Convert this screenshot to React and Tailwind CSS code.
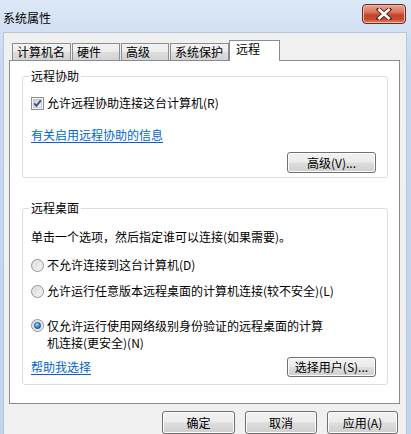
import React from 'react';

const btn =
    'flex items-center justify-center border border-[#707070] rounded-[3px] bg-[linear-gradient(#f2f2f2_0%,#ebebeb_48%,#dddddd_52%,#cfcfcf_100%)] shadow-[inset_0_0_0_1px_#fcfcfc] text-[12px] leading-[14px] text-black';

const tabs = [
    { label: '计算机名', w: 'w-[59px]' },
    { label: '硬件', w: 'w-[48px]' },
    { label: '高级', w: 'w-[48px]' },
    { label: '系统保护', w: 'w-[59px]' },
];

function CheckBox() {
    return (
        <svg width="13" height="13" viewBox="0 0 13 13">
            <defs>
                <linearGradient id="cbg" x1="0" y1="0" x2="1" y2="1">
                    <stop offset="0" stopColor="#cbcfd5" />
                    <stop offset="1" stopColor="#f6f6f6" />
                </linearGradient>
            </defs>
            <rect x="0.5" y="0.5" width="12" height="12" fill="#f4f4f4" stroke="#8e8f8f" />
            <rect x="2.5" y="2.5" width="8" height="8" fill="url(#cbg)" stroke="#c8cbd0" />
            <path d="M3.2 6.4 L5.4 8.8 L9.8 3.4" fill="none" stroke="#3a4f86" strokeWidth="1.9" />
        </svg>
    );
}

function Radio({ checked }) {
    return (
        <svg width="13" height="13" viewBox="0 0 13 13">
            <defs>
                <linearGradient id="rbg" x1="0" y1="0" x2="1" y2="1">
                    <stop offset="0" stopColor="#d4d4d4" />
                    <stop offset="1" stopColor="#fbfbfb" />
                </linearGradient>
                <radialGradient id="rdot" cx="0.4" cy="0.35" r="0.7">
                    <stop offset="0" stopColor="#9fe0fb" />
                    <stop offset="0.5" stopColor="#3b9ae0" />
                    <stop offset="1" stopColor="#0e4e9c" />
                </radialGradient>
            </defs>
            <circle cx="6.5" cy="6.5" r="6" fill="url(#rbg)" stroke="#939393" />
            <circle cx="6.5" cy="6.5" r="4.5" fill="none" stroke="#e9e9e9" />
            {checked && <circle cx="6.5" cy="6.5" r="3.2" fill="url(#rdot)" stroke="#1b4f8f" strokeWidth="0.6" />}
        </svg>
    );
}

function CloseButton() {
    return (
        <div className="mt-[4px] mr-[5px] w-[44px] h-[20px] rounded-[4px] border border-[#6b2a1d] bg-[linear-gradient(#e9a895_0%,#d7765f_40%,#c4432a_55%,#c94a30_80%,#e08a6b_100%)] shadow-[inset_0_0_0_1px_#f0b8a8] flex items-center justify-center">
            <svg width="16" height="12" viewBox="0 0 16 12">
                <path d="M3 1.5 L13 10.5 M13 1.5 L3 10.5" stroke="#5a1c12" strokeWidth="4.4" strokeLinecap="square" />
                <path d="M3.3 1.8 L12.7 10.2 M12.7 1.8 L3.3 10.2" stroke="#ffffff" strokeWidth="2.6" strokeLinecap="square" />
            </svg>
        </div>
    );
}

export default function App() {
    return (
        <div className="w-[411px] h-[434px] overflow-hidden flex flex-col bg-[linear-gradient(#dce8f6,#c4d7ee_70px,#c0d4ec)] text-black font-['Noto_Sans_CJK_SC','Noto_Sans',sans-serif] text-[12px]">
            {/* title bar */}
            <div className="flex justify-between h-[32px] shrink-0">
                <div className="pt-[11px] pl-[3px] leading-[14px]">系统属性</div>
                <CloseButton />
            </div>

            {/* client area */}
            <div className="flex-1 ml-[3px] mr-[4px] bg-[#f0f0f0] border-t border-l border-r border-[#b7c8dc] flex flex-col">
                {/* tab strip */}
                <div className="flex items-end pt-[7px] pl-[8px] -mb-px relative z-10">
                    {tabs.map((t) => (
                        <div
                            key={t.label}
                            className={`${t.w} h-[18px] mr-px border border-[#898c95] bg-[linear-gradient(#f3f3f3,#ebebeb_50%,#dedede_50%,#d3d3d3)] pl-[4px] leading-[16px]`}
                        >
                            {t.label}
                        </div>
                    ))}
                    <div className="w-[51px] h-[21px] -ml-px border border-b-0 border-[#898c95] bg-white pl-[6px] leading-[16px]">
                        远程
                    </div>
                </div>

                {/* panel */}
                <div className="ml-[5px] w-[391px] h-[344px] border border-[#898c95] bg-white pt-[8px] pl-[12px]">
                    <fieldset className="w-[366px] border border-[#d5dfe5] rounded-[3px] pl-[6px] pr-[11px] pb-[4px]">
                        <legend className="px-[2px] leading-[14px]">远程协助</legend>
                        <div className="mt-[12px] h-[16px] flex items-center pl-[2px]">
                            <CheckBox />
                            <span className="ml-[3px] leading-[16px]">允许远程协助连接这台计算机(R)</span>
                        </div>
                        <div className="mt-[16px] h-[16px] pl-[2px] leading-[16px] text-[#0066cc] underline underline-offset-2">
                            有关启用远程协助的信息
                        </div>
                        <div className="mt-[9px] flex justify-end">
                            <div className={`${btn} w-[89px] h-[21px]`}>高级(V)...</div>
                        </div>
                    </fieldset>

                    <fieldset className="mt-[23px] w-[366px] border border-[#d5dfe5] rounded-[3px] pl-[6px] pr-[11px] pb-[7px]">
                        <legend className="px-[2px] leading-[14px]">远程桌面</legend>
                        <div className="mt-[14px] h-[16px] pl-[2px] leading-[16px]">
                            单击一个选项，然后指定谁可以连接(如果需要)。
                        </div>
                        <div className="mt-[12px] h-[16px] flex items-center pl-[2px]">
                            <Radio />
                            <span className="ml-[3px] leading-[16px]">不允许连接到这台计算机(D)</span>
                        </div>
                        <div className="mt-[10px] h-[16px] flex items-center pl-[2px]">
                            <Radio />
                            <span className="ml-[3px] leading-[16px]">允许运行任意版本远程桌面的计算机连接(较不安全)(L)</span>
                        </div>
                        <div className="mt-[18px] flex items-start pl-[2px]">
                            <div className="pt-[2px]">
                                <Radio checked />
                            </div>
                            <span className="ml-[3px] leading-[17px]">
                                仅允许运行使用网络级别身份验证的远程桌面的计算
                                <br />
                                机连接(更安全)(N)
                            </span>
                        </div>
                        <div className="mt-[6px] h-[20px] flex items-center justify-between pl-[2px]">
                            <span className="text-[#0066cc] underline underline-offset-2 leading-[16px]">帮助我选择</span>
                            <div className={`${btn} w-[89px] h-[20px]`}>选择用户(S)...</div>
                        </div>
                    </fieldset>
                </div>

                {/* dialog buttons */}
                <div className="mt-[7px] flex justify-end gap-[10px] pr-[8px]">
                    <div className={`${btn} w-[73px] h-[23px] border-[#3c7fb1] shadow-[inset_0_0_0_1px_#9fd7f5]`}>确定</div>
                    <div className={`${btn} w-[72px] h-[23px]`}>取消</div>
                    <div className={`${btn} w-[71px] h-[23px]`}>应用(A)</div>
                </div>
            </div>
        </div>
    );
}
